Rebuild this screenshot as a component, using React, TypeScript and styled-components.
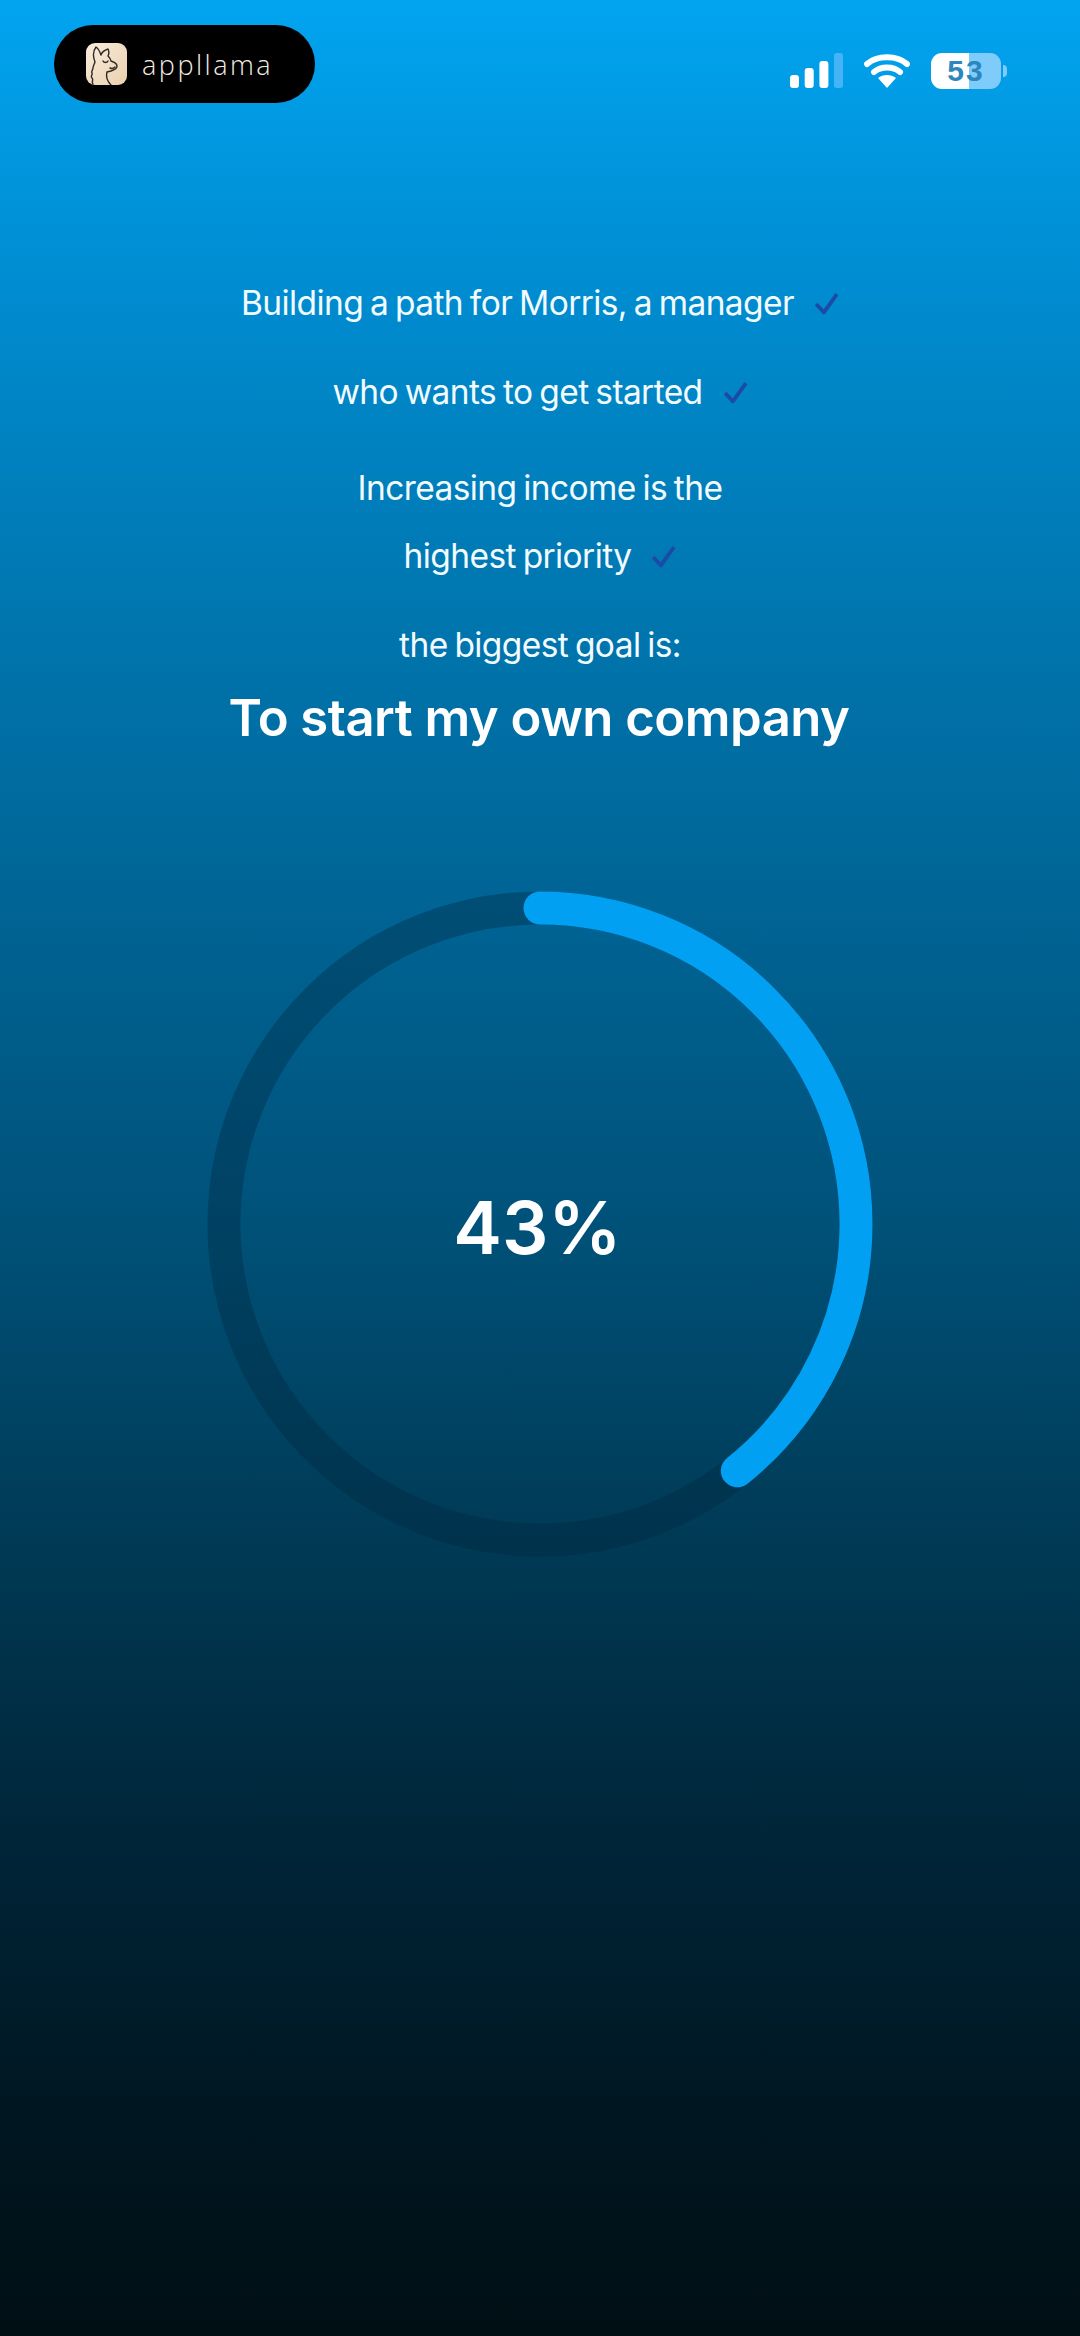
import { createGlobalStyle, styled } from "styled-components";

const GlobalStyle = createGlobalStyle`
  html, body {
    margin: 0;
    padding: 0;
    background: #00111a;
  }
`;

const Screen = styled.div`
  width: 1080px;
  height: 2336px;
  overflow: hidden;
  display: flex;
  flex-direction: column;
  align-items: center;
  font-family: Inter, "Liberation Sans", sans-serif;
  color: #f2fbff;
  background: linear-gradient(
    180deg,
    #02a4f0 0%,
    #0090d6 10%,
    #0078b2 25%,
    #006596 38%,
    #00527a 52%,
    #003a55 66%,
    #00263a 78%,
    #001722 90%,
    #000f14 100%
  );
`;

const StatusBar = styled.header`
  align-self: stretch;
  display: flex;
  justify-content: space-between;
  align-items: flex-start;
  padding: 25px 73px 0 54px;
`;

const Pill = styled.div`
  width: 261px;
  height: 78px;
  box-sizing: border-box;
  padding-left: 32px;
  display: flex;
  align-items: center;
  gap: 15px;
  border-radius: 39px;
  background: #000;
`;

const AppIcon = styled.svg`
  width: 41px;
  height: 42px;
  border-radius: 9px;
`;

const AppName = styled.span`
  font-family: "Open Sans", sans-serif;
  font-size: 27px;
  font-weight: 300;
  letter-spacing: 2.5px;
  color: #f3ebe0;
`;

const Indicators = styled.div`
  display: flex;
  align-items: center;
  gap: 21px;
  padding-top: 28px;
`;

const Battery = styled.div`
  width: 70px;
  height: 36px;
  border-radius: 11px;
  overflow: hidden;
  display: flex;
  align-items: center;
  justify-content: center;
  font-family: "Liberation Sans", sans-serif;
  font-size: 30px;
  font-weight: 700;
  letter-spacing: 2px;
  color: #2b87bd;
  background: linear-gradient(90deg, #fff 0 54%, #7fcbfa 54% 100%);
`;

const BatteryWrap = styled.div`
  display: flex;
  align-items: center;
  gap: 2px;
`;

const BatteryTip = styled.div`
  width: 4px;
  height: 12px;
  border-radius: 0 4px 4px 0;
  background: #7fcbfa;
`;

const Copy = styled.section`
  margin-top: 180px;
  display: flex;
  flex-direction: column;
  align-items: center;
`;

const Line = styled.p<{ $top: number }>`
  margin: ${(p) => p.$top}px 0 0;
  height: 40px;
  display: flex;
  align-items: center;
  gap: 20px;
  font-size: 33.5px;
  font-weight: 400;
  letter-spacing: -0.6px;
  word-spacing: -2px;
  white-space: nowrap;
`;

const Title = styled.h1`
  margin: 23px 0 0 -2px;
  font-size: 50.8px;
  line-height: 60px;
  font-weight: 600;
  letter-spacing: -0.5px;
  color: #fff;
`;

const TickIcon = styled.svg`
  width: 25px;
  height: 23px;
`;

const RingWrap = styled.div`
  margin-top: 143px;
  position: relative;
  width: 666px;
  height: 666px;
`;

const RingLabel = styled.div`
  position: absolute;
  inset: 0;
  display: flex;
  align-items: center;
  justify-content: center;
  padding: 6px 5px 0 0;
  font-size: 73px;
  font-weight: 600;
  color: #fff;
`;

const R = 316;
const CIRC = 2 * Math.PI * R;

function Tick() {
  return (
    <TickIcon viewBox="0 0 24 22">
      <path
        d="M2 11.5 L9.5 19.5 L22 2"
        fill="none"
        stroke="#1c4aa6"
        strokeWidth="3.6"
        strokeLinejoin="round"
      />
    </TickIcon>
  );
}

function Ring({ percent }: { percent: number }) {
  return (
    <svg width="666" height="666" viewBox="0 0 666 666">
      <circle cx="333" cy="333" r={R} fill="none" stroke="#00263c" strokeOpacity="0.35" strokeWidth="33" />
      <circle
        cx="333"
        cy="333"
        r={R}
        fill="none"
        stroke="#01a0f2"
        strokeWidth="33"
        strokeLinecap="round"
        strokeDasharray={`${(CIRC * percent) / 100} ${CIRC}`}
        transform="rotate(-90 333 333)"
      />
    </svg>
  );
}

export default function App() {
  return (
    <Screen>
      <GlobalStyle />
      <StatusBar>
        <Pill>
          <AppIcon viewBox="0 0 41 42">
            <defs>
              <linearGradient id="iconBg" x1="0" y1="0" x2="1" y2="1">
                <stop offset="0" stopColor="#f8ecdd" />
                <stop offset="1" stopColor="#ecd0ae" />
              </linearGradient>
            </defs>
            <rect width="41" height="42" fill="url(#iconBg)" />
            <path
              d="M7 41c-2-2 1-4-1-6s1-3 0-5 1-3 1-5 1-3 2-6c-2-5-2-11 1-15 3 2 4 5 5 8 1-3 4-5 7-6 1 2 1 5 0 7 2 2 3 4 3 5 3 1 6 2 6 5s-3 4-6 5l-4 1c-1 4 0 9 4 13"
              fill="none"
              stroke="#2d2a26"
              strokeWidth="1.4"
              strokeLinecap="round"
              strokeLinejoin="round"
            />
            <path
              d="M17 18c1 2 4 2 5 0M24 25c2 1 4 0 5-1"
              fill="none"
              stroke="#2d2a26"
              strokeWidth="1.4"
              strokeLinecap="round"
            />
          </AppIcon>
          <AppName>appllama</AppName>
        </Pill>
        <Indicators>
          <svg width="53" height="36" viewBox="0 0 53 36">
            <rect x="0" y="22" width="9" height="13" rx="3" fill="#fff" />
            <rect x="14.7" y="15" width="9" height="20" rx="3" fill="#fff" />
            <rect x="29.4" y="8" width="9" height="27" rx="3" fill="#fff" />
            <rect x="44" y="0" width="9" height="35" rx="3" fill="#45b4f6" />
          </svg>
          <svg width="46" height="36" viewBox="0 0 46 36">
            <path
              d="M3 11C13 2 33 2 43 11M10 19c7-6 19-6 26 0"
              fill="none"
              stroke="#fff"
              strokeWidth="6"
              strokeLinecap="round"
            />
            <path d="M14 25c5-4 13-4 18 0L23 35z" fill="#fff" />
          </svg>
          <BatteryWrap>
            <Battery>53</Battery>
            <BatteryTip />
          </BatteryWrap>
        </Indicators>
      </StatusBar>

      <Copy>
        <Line $top={0}>
          Building a path for Morris, a manager <Tick />
        </Line>
        <Line $top={49}>
          who wants to get started <Tick />
        </Line>
        <Line $top={56}>Increasing income is the</Line>
        <Line $top={28}>
          highest priority <Tick />
        </Line>
        <Line $top={49}>the biggest goal is:</Line>
        <Title>To start my own company</Title>
      </Copy>

      <RingWrap>
        <Ring percent={39.25} />
        <RingLabel>43%</RingLabel>
      </RingWrap>
    </Screen>
  );
}
